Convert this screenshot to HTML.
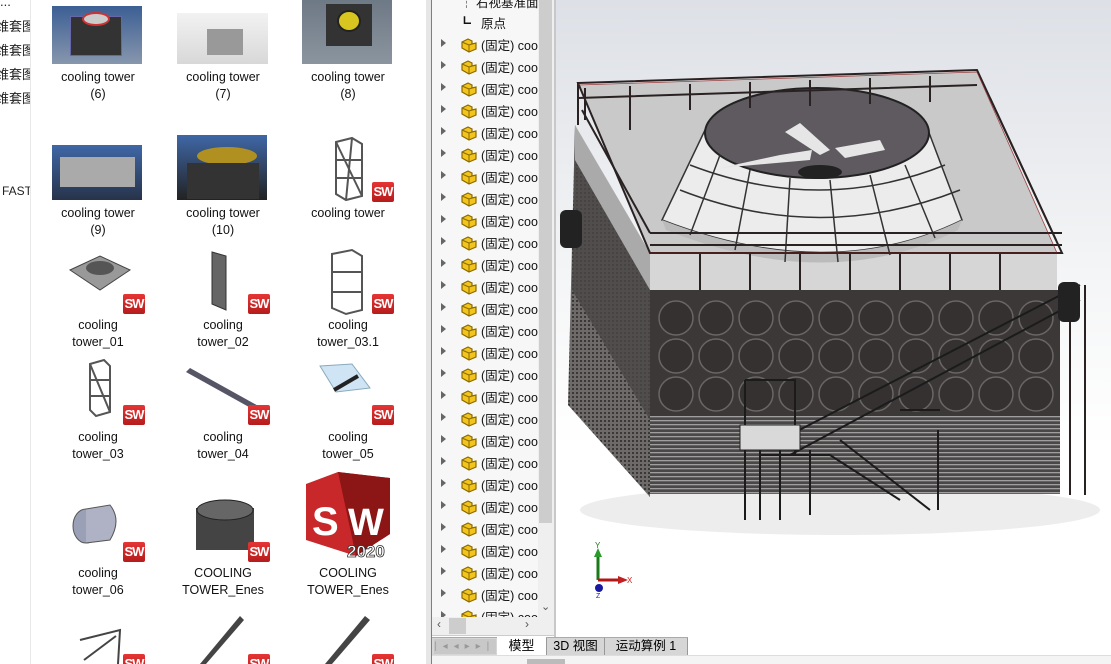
<!DOCTYPE html>
<html><head><meta charset="utf-8"><style>
*{margin:0;padding:0;box-sizing:border-box}
html,body{width:1111px;height:664px;overflow:hidden}
body{background:#fff;font-family:"Liberation Sans","Noto Sans CJK SC",sans-serif;position:relative}
.abs{position:absolute}
.side{left:0;top:0;width:31px;height:664px;background:#fff;border-right:1px solid #e8e8e8;font-size:13px;color:#222;overflow:hidden;white-space:nowrap}
.lbl{position:absolute;width:120px;text-align:center;font-size:12.5px;line-height:17px;color:#111}
.row{position:absolute;left:0;height:22px;width:106px;font-size:12.5px;color:#111;white-space:nowrap}
.row .ar{position:absolute;left:9px;top:6px;width:0;height:0;border-left:5px solid #666;border-top:4px solid transparent;border-bottom:4px solid transparent}
.row .t{position:absolute;left:49px;top:2px}
.sw{position:absolute;width:22px;height:20px;background:linear-gradient(#e53535,#b51c1c);color:#fff;font:bold 13px "Liberation Sans",sans-serif;text-align:center;line-height:20px;border-radius:2px;letter-spacing:-1px}
</style></head><body>
<div class="abs side">
<div class="abs" style="left:0;top:-6px">...</div>
<div class="abs" style="left:-4px;top:16px">维套图</div>
<div class="abs" style="left:-4px;top:40px">维套图</div>
<div class="abs" style="left:-4px;top:64px">维套图</div>
<div class="abs" style="left:-4px;top:88px">维套图</div>
<div class="abs" style="left:2px;top:184px;font-size:12px">FAST</div>
</div>

<div class="abs" style="left:52px;top:6px;width:90px;height:58px;background:linear-gradient(#3c5f94,#8796ad)"><div class="abs" style="left:18px;top:10px;width:52px;height:40px;background:#333;border:1px solid #66a"></div><div class="abs" style="left:30px;top:6px;width:28px;height:14px;border-radius:50%;background:#ccc;border:2px solid #c33"></div></div>
<div class="abs" style="left:177px;top:13px;width:91px;height:51px;background:linear-gradient(#f2f2f2,#d8d8d8)"><div class="abs" style="left:30px;top:16px;width:36px;height:26px;background:#999"></div></div>
<div class="abs" style="left:302px;top:0;width:90px;height:64px;background:linear-gradient(#6e7986,#8b959f)"><div class="abs" style="left:24px;top:4px;width:46px;height:42px;background:#333"></div><div class="abs" style="left:35px;top:10px;width:24px;height:22px;border-radius:50%;background:#d8c520;border:2px solid #222"></div></div>
<div class="abs" style="left:52px;top:145px;width:90px;height:55px;background:linear-gradient(#3f67a6,#27334a)"><div class="abs" style="left:8px;top:12px;width:75px;height:30px;background:#aaa"></div></div>
<div class="abs" style="left:177px;top:135px;width:90px;height:65px;background:linear-gradient(#3f67a6,#222)"><div class="abs" style="left:20px;top:12px;width:60px;height:18px;background:#b09020;border-radius:50%"></div><div class="abs" style="left:10px;top:28px;width:72px;height:36px;background:#333"></div></div>

<svg class="abs" style="left:0;top:0" width="430" height="664">
<g stroke="#555" stroke-width="2" fill="none">
<path d="M336 142 L352 138 L362 144 L362 196 L346 200 L336 194 Z M336 160 L362 160 M336 178 L362 178 M336 142 L362 196 M352 138 L346 200"/>
<path d="M332 254 L352 250 L362 256 L362 310 L346 314 L332 308 Z M332 272 L362 272 M332 292 L362 292"/>
<path d="M90 364 L104 360 L110 366 L110 412 L96 416 L90 410 Z M90 380 L110 380 M90 396 L110 396 M90 364 L110 412"/>
</g>
<path d="M70 270 L100 256 L130 270 L100 290 Z" fill="#999" stroke="#444"/>
<ellipse cx="100" cy="268" rx="14" ry="7" fill="#555"/>
<path d="M212 252 L226 256 L226 310 L212 304 Z" fill="#666" stroke="#333"/>
<path d="M186 372 L190 368 L262 408 L258 412 Z" fill="#556"/>
<path d="M320 366 L352 364 L370 388 L336 392 Z" fill="#cfe4f4" stroke="#8ab"/>
<path d="M334 390 L358 376" stroke="#222" stroke-width="4"/>
<ellipse cx="86" cy="526" rx="13" ry="17" fill="#9aa0b6" stroke="#555"/>
<path d="M86 509 L110 505 Q122 520 110 540 L86 543" fill="#aeb2c4" stroke="#555"/>
<rect x="196" y="508" width="58" height="42" fill="#444"/>
<ellipse cx="225" cy="510" rx="28" ry="10" fill="#666" stroke="#222"/>
<path d="M306 484 L338 472 L390 478 L390 534 L356 556 L306 540 Z" fill="#c8282a"/>
<path d="M338 472 L390 478 L390 534 L356 556 Z" fill="#8c1515"/>
<text x="312" y="535" font-family="Liberation Sans" font-weight="bold" font-size="40" fill="#fff">S</text>
<text x="348" y="535" font-family="Liberation Sans" font-weight="bold" font-size="38" fill="#fff">W</text>
<text x="347" y="557" font-family="Liberation Sans" font-weight="bold" font-size="17" fill="#fff" stroke="#333" stroke-width="0.8">2020</text>
<path d="M80 640 L120 630 L118 664 M84 660 L116 636" stroke="#444" stroke-width="2" fill="none"/>
<path d="M200 664 L240 616 L244 620 L206 664" fill="#444"/>
<path d="M325 664 L365 616 L370 620 L332 664" fill="#444"/>
</svg>
<div class="sw" style="left:372px;top:182px">SW</div>
<div class="sw" style="left:123px;top:294px">SW</div>
<div class="sw" style="left:248px;top:294px">SW</div>
<div class="sw" style="left:372px;top:294px">SW</div>
<div class="sw" style="left:123px;top:405px">SW</div>
<div class="sw" style="left:248px;top:405px">SW</div>
<div class="sw" style="left:372px;top:405px">SW</div>
<div class="sw" style="left:123px;top:542px">SW</div>
<div class="sw" style="left:248px;top:542px">SW</div>
<div class="sw" style="left:123px;top:654px">SW</div>
<div class="sw" style="left:248px;top:654px">SW</div>
<div class="sw" style="left:372px;top:654px">SW</div>

<div class="lbl" style="left:38px;top:69px">cooling tower<br>(6)</div>
<div class="lbl" style="left:163px;top:69px">cooling tower<br>(7)</div>
<div class="lbl" style="left:288px;top:69px">cooling tower<br>(8)</div>
<div class="lbl" style="left:38px;top:205px">cooling tower<br>(9)</div>
<div class="lbl" style="left:163px;top:205px">cooling tower<br>(10)</div>
<div class="lbl" style="left:288px;top:205px">cooling tower</div>
<div class="lbl" style="left:38px;top:317px">cooling<br>tower_01</div>
<div class="lbl" style="left:163px;top:317px">cooling<br>tower_02</div>
<div class="lbl" style="left:288px;top:317px">cooling<br>tower_03.1</div>
<div class="lbl" style="left:38px;top:429px">cooling<br>tower_03</div>
<div class="lbl" style="left:163px;top:429px">cooling<br>tower_04</div>
<div class="lbl" style="left:288px;top:429px">cooling<br>tower_05</div>
<div class="lbl" style="left:38px;top:565px">cooling<br>tower_06</div>
<div class="lbl" style="left:163px;top:565px">COOLING<br>TOWER_Enes</div>
<div class="lbl" style="left:288px;top:565px">COOLING<br>TOWER_Enes</div>

<div class="abs" style="left:426px;top:0;width:6px;height:664px;background:#e6e6e6;border-right:1px solid #3c8fd8"></div>

<div class="abs" style="left:432px;top:0;width:106px;height:617px;background:#f7f7f7;overflow:hidden">
<div class="row" style="top:-10px"><span class="t" style="left:28px">┆ 右视基准面</span></div>
<div class="row" style="top:11px"><span class="abs" style="left:26px;top:2px;font-size:13px">┗</span><span class="t">原点</span></div>
</div>
<div class="abs" style="left:432px;top:0;width:106px;height:617px;overflow:hidden">
<script>
for(let i=0;i<27;i++){let y=33+i*22;document.write('<div class="row" style="top:'+y+'px"><span class="ar"></span><svg class="abs" style="left:27px;top:2px" width="20" height="18"><path d="M3 7 L9 4 L13 6 L13 9 L17 8 L17 14 L10 17 L3 13 Z" fill="#f2c41c" stroke="#8a6a00" stroke-width="1.2"/><path d="M3 7 L10 10 L10 17 M10 10 L13 9" fill="none" stroke="#8a6a00" stroke-width="1"/></svg><span class="t">(固定) coo</span></div>')}
</script>
</div>
<div class="abs" style="left:538px;top:0;width:16px;height:617px;background:#efefef"></div>
<div class="abs" style="left:539px;top:0;width:13px;height:523px;background:#cdcdcd"></div>
<div class="abs" style="left:541px;top:600px;font-size:11px;color:#555">⌄</div>
<div class="abs" style="left:432px;top:617px;width:122px;height:19px;background:#efefef;border-bottom:1px solid #ccc"></div>
<div class="abs" style="left:449px;top:618px;width:17px;height:16px;background:#cdcdcd"></div>
<div class="abs" style="left:437px;top:617px;font-size:12px;color:#555">‹</div>
<div class="abs" style="left:525px;top:617px;font-size:12px;color:#555">›</div>
<div class="abs" style="left:554px;top:0;width:2px;height:637px;background:#c8c8c8"></div>

<div class="abs" style="left:556px;top:0;width:555px;height:637px;background:linear-gradient(#dde0e6 0%,#f5f6f7 45%,#fff 70%)"></div>
<svg class="abs" style="left:556px;top:0" width="555" height="637" viewBox="556 0 555 637">
<defs>
<pattern id="lv" width="8" height="4" patternUnits="userSpaceOnUse"><rect width="8" height="4" fill="#4a4747"/><rect width="8" height="1.3" fill="#a09e9e"/></pattern>
<pattern id="tx" width="4" height="4" patternUnits="userSpaceOnUse"><rect width="4" height="4" fill="#6e6a6a"/><rect width="2" height="2" fill="#3a3737"/></pattern>
</defs>
<ellipse cx="840" cy="510" rx="260" ry="25" fill="#e8e8e8" opacity="0.8"/>
<path d="M575 125 L652 290 L650 497 L568 405 Z" fill="url(#tx)"/>
<path d="M575 125 L652 290 L650 420 L572 290 Z" fill="#4a4646" opacity="0.8"/>
<rect x="650" y="290" width="410" height="126" fill="#3c3838"/>
<rect x="650" y="416" width="410" height="78" fill="url(#lv)"/>
<g fill="#353131" stroke="#6a6666" stroke-width="1.5">
<circle cx="676" cy="318" r="17"/><circle cx="716" cy="318" r="17"/><circle cx="756" cy="318" r="17"/><circle cx="796" cy="318" r="17"/><circle cx="836" cy="318" r="17"/><circle cx="876" cy="318" r="17"/><circle cx="916" cy="318" r="17"/><circle cx="956" cy="318" r="17"/><circle cx="996" cy="318" r="17"/><circle cx="1036" cy="318" r="17"/>
<circle cx="676" cy="356" r="17"/><circle cx="716" cy="356" r="17"/><circle cx="756" cy="356" r="17"/><circle cx="796" cy="356" r="17"/><circle cx="836" cy="356" r="17"/><circle cx="876" cy="356" r="17"/><circle cx="916" cy="356" r="17"/><circle cx="956" cy="356" r="17"/><circle cx="996" cy="356" r="17"/><circle cx="1036" cy="356" r="17"/>
<circle cx="676" cy="394" r="17"/><circle cx="716" cy="394" r="17"/><circle cx="756" cy="394" r="17"/><circle cx="796" cy="394" r="17"/><circle cx="836" cy="394" r="17"/><circle cx="876" cy="394" r="17"/><circle cx="916" cy="394" r="17"/><circle cx="956" cy="394" r="17"/><circle cx="996" cy="394" r="17"/><circle cx="1036" cy="394" r="17"/>
</g>
<path d="M578 85 L977 72 L1057 253 L650 253 Z" fill="#c9c9c9"/>
<path d="M650 253 L1057 253 L1057 290 L650 290 Z" fill="#d6d6d6"/>
<path d="M575 125 L650 253 L650 290 L575 160 Z" fill="#aaa"/>
<path d="M705 130 Q816 60 928 130 L962 220 Q830 285 662 220 Z" fill="#ececec" stroke="#333" stroke-width="1.5"/>
<path d="M662 220 Q830 285 962 220 L958 230 Q830 295 666 230Z" fill="#bbb"/>
<ellipse cx="817" cy="133" rx="112" ry="45" fill="#5e5a60" stroke="#222" stroke-width="2"/>
<path d="M785 132 L800 123 L830 150 L820 155Z M835 148 L880 140 L885 150 L845 158Z M780 155 L812 150 L810 160 L720 168 Z" fill="#e6e6e6"/>
<ellipse cx="820" cy="172" rx="22" ry="7" fill="#222"/>
<g stroke="#333" stroke-width="1.5" fill="none">
<path d="M680 190 Q820 245 960 190 M690 165 Q820 215 945 165"/>
<path d="M720 155 L690 235 M750 170 L735 250 M790 178 L785 262 M830 180 L838 262 M870 175 L890 255 M905 165 L935 238"/>
</g>
<g stroke="#2a2222" stroke-width="2" fill="none">
<path d="M578 83 L977 70 L1062 253 L650 253 Z"/>
<path d="M578 98 L977 85 M582 110 L650 233 M990 98 L1056 240"/>
<path d="M650 233 L1062 233 M650 245 L1062 245"/>
<path d="M585 88 L585 120 M630 86 L630 130 M690 84 L690 110 M750 82 L750 108 M810 80 L810 106 M870 78 L870 104 M930 76 L930 102"/>
<path d="M700 253 L700 290 M750 253 L750 290 M800 253 L800 290 M850 253 L850 290 M900 253 L900 290 M950 253 L950 290 M1000 253 L1000 290"/>
<path d="M1085 285 L1085 495 M1070 290 L1070 495 M578 83 L578 125"/>
</g>
<g stroke="#8b1d1d" stroke-width="0.8" fill="none" opacity="0.8"><path d="M578 85 L977 72 L1057 253 L650 253"/></g>
<g stroke="#1b1b1b" stroke-width="2" fill="none">
<path d="M780 440 L1080 285 M790 455 L1080 300 M760 455 L830 455 L900 500 M840 440 L930 510"/>
<path d="M745 380 L795 380 L795 455 M745 380 L745 420 M745 420 L745 520 M760 450 L760 520 M780 450 L780 520 M810 450 L810 515"/>
<path d="M938 430 L938 510 M900 410 L940 410"/>
</g>
<rect x="740" y="425" width="60" height="25" fill="#d9d9d9" stroke="#222"/>
<rect x="560" y="210" width="22" height="38" rx="6" fill="#222"/>
<rect x="1058" y="282" width="22" height="40" rx="6" fill="#222"/>
<path d="M598 580 L598 556" stroke="#1a7a1a" stroke-width="3"/>
<path d="M594 557 L598 548 L602 557Z" fill="#2a9a2a"/>
<path d="M598 580 L620 580" stroke="#b01818" stroke-width="3"/>
<path d="M618 576 L628 580 L618 584Z" fill="#c02020"/>
<circle cx="599" cy="588" r="4" fill="#1a1aa0"/>
<text x="595" y="548" font-size="8" fill="#1a7a1a" font-family="Liberation Sans">Y</text>
<text x="627" y="583" font-size="8" fill="#d02020" font-family="Liberation Sans">X</text>
<text x="596" y="598" font-size="7" fill="#1a1ad0" font-family="Liberation Sans">Z</text>
</svg>

<div class="abs" style="left:432px;top:637px;width:679px;height:27px;background:#fff"></div>
<div class="abs" style="left:432px;top:637px;width:256px;height:18px;background:#d6d6d6;border-top:1px solid #aaa"></div>
<div class="abs" style="left:434px;top:639px;width:62px;height:15px;background:#c8c8c8;color:#999;font-size:10px;letter-spacing:6px;line-height:15px">|◂◂▸▸|</div>
<div class="abs" style="left:497px;top:637px;width:49px;height:18px;background:#fff;font-size:13px;text-align:center;line-height:18px">模型</div>
<div class="abs" style="left:546px;top:638px;width:58px;height:17px;border-left:1px solid #999;font-size:12.5px;text-align:center;line-height:17px">3D 视图</div>
<div class="abs" style="left:604px;top:638px;width:84px;height:17px;border-left:1px solid #999;border-right:1px solid #999;font-size:12.5px;text-align:center;line-height:17px">运动算例 1</div>
<div class="abs" style="left:432px;top:655px;width:679px;height:9px;background:#f4f4f4;border-top:1px solid #ddd"></div>
<div class="abs" style="left:527px;top:659px;width:38px;height:5px;background:#bbb"></div>
</body></html>
